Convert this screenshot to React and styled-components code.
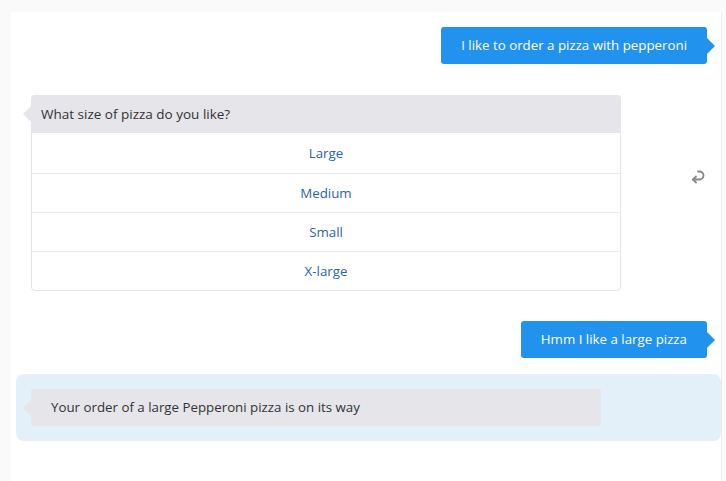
import React from 'react';
import styled, { createGlobalStyle } from 'styled-components';

const Global = createGlobalStyle`
  html, body {
    margin: 0;
    background: #fafafa;
    font-family: "Open Sans", "Noto Sans", sans-serif;
  }
`

const Panel = styled.div`
  margin: 12px 0 0 11px;
  width: 711px;
  min-height: 469px;
  background: #fff;
  border-right: 1px solid #ececec;
  display: flex;
  flex-direction: column;
  padding-top: 15px;
  box-sizing: border-box;
`

const UserRow = styled.div`
  display: flex;
  justify-content: flex-end;
  padding-right: 14px;
  margin-bottom: ${p => p.gap}px;
`

const UserBubble = styled.div`
  position: relative;
  background: #2192ee;
  color: #fff;
  font-size: 13.3px;
  line-height: 17px;
  padding: 10px 20px;
  border-radius: 3px;

  &::after {
    content: '';
    position: absolute;
    right: -8px;
    top: 50%;
    margin-top: -8px;
    border-left: 8px solid #2192ee;
    border-top: 8px solid transparent;
    border-bottom: 8px solid transparent;
  }
`

const BotRow = styled.div`
  display: flex;
  align-items: center;
  padding-left: 20px;
  margin-bottom: 30px;
`

const Card = styled.div`
  width: 590px;
  border: 1px solid #e4e4e8;
  border-radius: 4px;
  box-sizing: border-box;
`

const CardHead = styled.div`
  position: relative;
  background: #e5e5ea;
  color: #333;
  font-size: 13.5px;
  line-height: 18px;
  padding: 10px 10px 10px;
  margin: -1px -1px 0;
  border-radius: 4px 4px 0 0;

  &::before {
    content: '';
    position: absolute;
    left: -8px;
    top: 50%;
    margin-top: -8px;
    border-right: 8px solid #e5e5ea;
    border-top: 8px solid transparent;
    border-bottom: 8px solid transparent;
  }
`

const Option = styled.div`
  text-align: center;
  color: #2b63ad;
  font-size: 13.3px;
  line-height: 18px;
  padding: ${p => (p.first ? '11px 0 11px' : '10px 0')};
  border-top: ${p => (p.first ? 'none' : '1px solid #e9e9ec')};
`

const ReplyBtn = styled.div`
  margin: 0 0 0 68px;
  padding-bottom: 32px;
  display: flex;
  color: #888;
`

const Highlight = styled.div`
  margin-left: 5px;
  background: #e3f0f9;
  border-radius: 8px;
  padding: 15px 0 15px 15px;
`

const BotBubble = styled.div`
  position: relative;
  width: 570px;
  box-sizing: border-box;
  background: #e5e5ea;
  color: #333;
  font-size: 13.3px;
  line-height: 17px;
  padding: 10px 20px;
  border-radius: 3px;

  &::before {
    content: '';
    position: absolute;
    left: -8px;
    top: 50%;
    margin-top: -8px;
    border-right: 8px solid #e5e5ea;
    border-top: 8px solid transparent;
    border-bottom: 8px solid transparent;
  }
`

const sizes = ['Large', 'Medium', 'Small', 'X-large']

const ReplyIcon = () => (
  <svg width="18" height="18" viewBox="0 0 18 18" fill="none" stroke="currentColor" strokeWidth="1.8" strokeLinecap="round" strokeLinejoin="round">
    <path d="M9 3.5h1.5a4 4 0 0 1 0 8H4" />
    <path d="M7 8.5l-3 3 3 3" />
  </svg>
)

export default function App() {
  return (
    <>
      <Global />
      <Panel>
        <UserRow gap={31}>
          <UserBubble>I like to order a pizza with pepperoni</UserBubble>
        </UserRow>
        <BotRow>
          <Card>
            <CardHead>What size of pizza do you like?</CardHead>
            {sizes.map((s, i) => (
              <Option key={s} first={i === 0}>{s}</Option>
            ))}
          </Card>
          <ReplyBtn><ReplyIcon /></ReplyBtn>
        </BotRow>
        <UserRow gap={16}>
          <UserBubble>Hmm I like a large pizza</UserBubble>
        </UserRow>
        <Highlight>
          <BotBubble>Your order of a large Pepperoni pizza is on its way</BotBubble>
        </Highlight>
      </Panel>
    </>
  )
}
